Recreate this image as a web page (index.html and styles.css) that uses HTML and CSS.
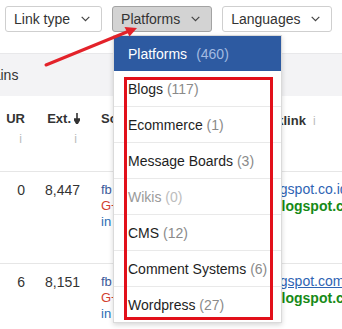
FILE: index.html
```html
<!DOCTYPE html>
<html>
<head>
<meta charset="utf-8">
<link rel="stylesheet" href="styles.css">
</head>
<body>
<div class="page">
  <div class="toolbar">
    <button class="btn">Link type <svg class="chev" viewBox="0 0 9 6"><polyline points="0.7,0.8 4.5,4.6 8.3,0.8"/></svg></button>
    <button class="btn active">Platforms <svg class="chev" viewBox="0 0 9 6"><polyline points="0.7,0.8 4.5,4.6 8.3,0.8"/></svg></button>
    <button class="btn">Languages <svg class="chev" viewBox="0 0 9 6"><polyline points="0.7,0.8 4.5,4.6 8.3,0.8"/></svg></button>
    <button class="btn">Traffic <svg class="chev" viewBox="0 0 9 6"><polyline points="0.7,0.8 4.5,4.6 8.3,0.8"/></svg></button>
  </div>

  <div class="band"><span class="band-label">Referring domains</span></div>

  <div class="table">
    <div class="row head">
      <div class="cell num"><div class="h">UR</div><div class="info">i</div></div>
      <div class="cell num"><div class="h">Ext.<svg class="sort" viewBox="0 0 6 11"><line x1="3" y1="0" x2="3" y2="7"/><polygon points="0,6 6,6 3,11"/></svg></div><div class="info">i</div></div>
      <div class="cell social"><div class="h">Social</div></div>
      <div class="cell link"><span class="h">Anchor and backlink</span><span class="info inline">i</span></div>
    </div>
    <div class="row body">
      <div class="cell num">0</div>
      <div class="cell num">8,447</div>
      <div class="cell social"><div class="fb">fb</div><div class="gp">G+</div><div class="in">in</div></div>
      <div class="cell link"><div class="url">resep-kue.blogspot.co.id/2017/05/</div><div class="domain">resep-kue.blogspot.com</div></div>
    </div>
    <div class="row body">
      <div class="cell num">6</div>
      <div class="cell num">8,151</div>
      <div class="cell social"><div class="fb">fb</div><div class="gp">G+</div><div class="in">in</div></div>
      <div class="cell link"><div class="url under">resep-kue.blogspot.com/</div><div class="domain">resep-kue.blogspot.com</div></div>
    </div>
  </div>

  <div class="menu">
    <div class="menu-head">Platforms<span class="head-count">(460)</span></div>
    <div class="item">Blogs <span class="count">(117)</span></div>
    <div class="item">Ecommerce <span class="count">(1)</span></div>
    <div class="item">Message Boards <span class="count">(3)</span></div>
    <div class="item disabled">Wikis <span class="count">(0)</span></div>
    <div class="item">CMS <span class="count">(12)</span></div>
    <div class="item">Comment Systems <span class="count">(6)</span></div>
    <div class="item">Wordpress <span class="count">(27)</span></div>
  </div>

  <div class="highlight"></div>

  <svg class="arrow" viewBox="0 0 342 329">
    <line x1="46" y1="65" x2="128" y2="31.5"/>
    <polygon points="137,28 124.5,27 129.5,36.5"/>
  </svg>
</div>
</body>
</html>
```

FILE: styles.css
```css
body {
  margin: 0;
  background: #fff;
  font-family: "Liberation Sans", Arial, sans-serif;
  color: #333;
}

.page {
  position: relative;
  width: 342px;
  height: 329px;
  overflow: hidden;
}

.toolbar {
  display: flex;
  gap: 10px;
  padding: 6px 0 0 5px;
  height: 26px;
  white-space: nowrap;
}

.btn {
  flex: none;
  display: flex;
  align-items: center;
  gap: 11px;
  height: 26px;
  box-sizing: border-box;
  padding: 0 11px 0 8px;
  border: 1px solid #cfcfcf;
  border-radius: 3px;
  background: #fff;
  font: 14px "Liberation Sans", Arial, sans-serif;
  color: #333;
}

.btn.active {
  background: #d3d3d3;
  border-color: #a3a3a3;
}

.chev {
  width: 9px;
  height: 6px;
  fill: none;
  stroke: #444;
  stroke-width: 1.2;
}

.band {
  margin-top: 21px;
  height: 42px;
  border-top: 1px solid #e8e8ea;
  background: #f3f3f5;
  display: flex;
  align-items: center;
  font-size: 14px;
}

.band-label {
  white-space: nowrap;
  margin-left: -96px;
  color: #333;
}

.row {
  display: grid;
  grid-template-columns: 26px 55px 97px 1fr;
  border-bottom: 1px solid #e6e6e6;
}

.row.head {
  height: 75px;
}

.row.body {
  height: 91px;
}

.cell {
  white-space: nowrap;
}

.head .cell {
  padding-top: 15px;
}

.body .cell {
  padding-top: 10px;
  line-height: 16px;
  font-size: 14px;
}

.num {
  text-align: right;
  padding-right: 1px;
}

.h {
  font-size: 13px;
  font-weight: bold;
  line-height: 16px;
  color: #333;
}

.sort {
  width: 6px;
  height: 11px;
  margin-left: 3px;
  vertical-align: -1px;
  stroke: #333;
  stroke-width: 1.6;
  fill: #333;
}

.info {
  font-size: 12px;
  line-height: 16px;
  margin-top: 4px;
  padding-right: 3px;
  color: #bcbcbc;
}

.info.inline {
  margin-left: 7px;
  margin-top: 0;
}

.social {
  padding-left: 20px;
}

.body .social {
  font-size: 13px;
}

.fb { color: #3b5a9a; }
.gp { color: #d2402f; }
.in { color: #2a6db5; }

.body .link {
  padding-top: 9px;
  line-height: 17px;
}

.url {
  padding-left: 17px;
  color: #2e63b3;
}

.url.under {
  text-decoration: underline;
}

.domain {
  padding-left: 25px;
  font-weight: bold;
  color: #178a17;
}

.menu {
  position: absolute;
  left: 113px;
  top: 35px;
  width: 169px;
  box-sizing: border-box;
  background: #fff;
  border: 1px solid #dadada;
  box-shadow: 0 2px 5px rgba(0, 0, 0, 0.16);
  font-size: 14px;
}

.menu-head {
  height: 35px;
  display: flex;
  align-items: center;
  padding-left: 14px;
  background: #2d5aa1;
  color: #fff;
}

.head-count {
  margin-left: 9px;
  color: #a3bbe2;
}

.item {
  height: 35px;
  display: flex;
  align-items: center;
  padding-left: 14px;
  border-bottom: 1px solid #e9e9e9;
  color: #1e1e1e;
  white-space: pre;
}

.item:last-child {
  border-bottom: none;
}

.count {
  color: #8a8a8a;
}

.item.disabled {
  color: #9a9a9a;
}

.item.disabled .count {
  color: #bdbdbd;
}

.highlight {
  position: absolute;
  left: 124px;
  top: 77px;
  width: 149px;
  height: 243px;
  box-sizing: border-box;
  border: 3px solid #e2101a;
}

.arrow {
  position: absolute;
  left: 0;
  top: 0;
  width: 342px;
  height: 329px;
  pointer-events: none;
}

.arrow line {
  stroke: #e3222a;
  stroke-width: 3;
  stroke-linecap: round;
}

.arrow polygon {
  fill: #e3222a;
}
```
